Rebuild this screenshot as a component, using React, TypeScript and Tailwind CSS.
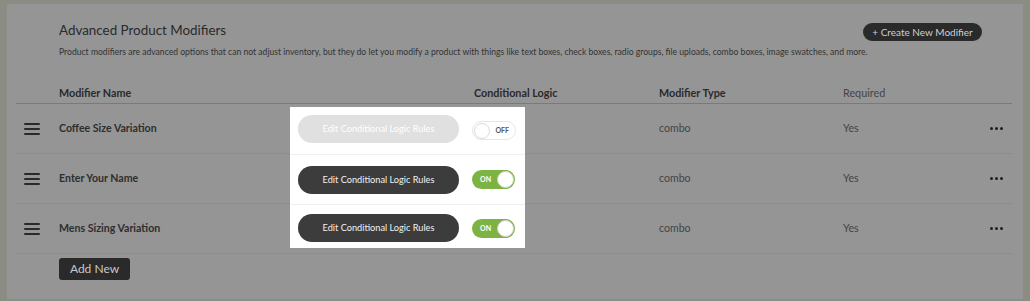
import React from "react";

type Row = { name: string; enabled: boolean };

const rows: Row[] = [
  { name: "Coffee Size Variation", enabled: false },
  { name: "Enter Your Name", enabled: true },
  { name: "Mens Sizing Variation", enabled: true },
];

function DragHandle() {
  return (
    <div className="flex w-[16px] flex-col gap-[3px]">
      <span className="h-[2px] w-full rounded bg-[#2a2a2a]" />
      <span className="h-[2px] w-full rounded bg-[#2a2a2a]" />
      <span className="h-[2px] w-full rounded bg-[#2a2a2a]" />
    </div>
  );
}

function Dots() {
  return (
    <div className="flex gap-[2px]">
      <span className="h-[3px] w-[3px] rounded-full bg-[#1f1f1f]" />
      <span className="h-[3px] w-[3px] rounded-full bg-[#1f1f1f]" />
      <span className="h-[3px] w-[3px] rounded-full bg-[#1f1f1f]" />
    </div>
  );
}

function Toggle({ on }: { on: boolean }) {
  if (on) {
    return (
      <div className="flex h-[19px] w-[43px] items-center justify-between rounded-full bg-[#7cb342] pl-[8px] pr-[1px]">
        <span className="text-[7px] font-bold text-white">ON</span>
        <span className="h-[17px] w-[17px] rounded-full border border-[#d0d0d0] bg-white" />
      </div>
    );
  }
  return (
    <div className="flex h-[19px] w-[44px] items-center justify-between rounded-full border border-[#e6e6e6] bg-white pl-[1px] pr-[6px]">
      <span className="h-[16px] w-[16px] rounded-full border border-[#dcdcdc] bg-white" />
      <span className="text-[7px] font-bold text-[#555]">OFF</span>
    </div>
  );
}

function RuleButton({ on }: { on: boolean }) {
  return (
    <div
      className={`flex h-[28px] w-[161px] items-center justify-center rounded-full text-[9.2px] ${
        on ? "bg-[#3c3c3c] text-[#f2f2f2]" : "bg-[#e0e0e0] text-white"
      }`}
    >
      Edit Conditional Logic Rules
    </div>
  );
}

export default function App() {
  return (
    <div
      className="h-[301px] w-[1030px] overflow-hidden bg-[#8b8c84] pl-[7px] pt-[4px]"
      style={{ fontFamily: 'Lato, "Noto Sans", sans-serif' }}
    >
      <div className="relative h-[295px] w-[1016px] bg-[#959595] pt-[15px]">
        {/* Heading */}
        <div className="flex items-start justify-between pl-[52px] pr-[41px]">
          <h1 className="text-[13.4px] leading-[22px] text-[#2a2a2a]">Advanced Product Modifiers</h1>
          <button className="mt-[4px] flex h-[18px] w-[119px] items-center justify-center rounded-full bg-[#2a2a2a] text-[10px] text-[#cfcfcf]">
            + Create New Modifier
          </button>
        </div>
        <p className="mt-[5px] pl-[52px] text-[8.6px] leading-[12px] text-[#333]">
          Product modifiers are advanced options that can not adjust inventory, but they do let you modify a product with things like text boxes, check boxes, radio groups, file uploads, combo boxes, image swatches, and more.
        </p>

        {/* Table */}
        <div className="ml-[9px] mr-[11px] mt-[25px]">
          <div className="flex h-[21px] items-center border-b border-[#7a7a7a] text-[10.8px] text-[#2a2a2a]">
            <div className="w-[43px]" />
            <div className="w-[415px] font-bold">Modifier Name</div>
            <div className="w-[185px] font-bold">Conditional Logic</div>
            <div className="w-[184px] font-bold">Modifier Type</div>
            <div className="font-normal text-[#454545]">Required</div>
          </div>
          {rows.map((r) => (
            <div key={r.name} className="flex h-[50px] items-center border-b border-[#8d8d8d] text-[10.6px]">
              <div className="w-[43px] pl-[8px]">
                <DragHandle />
              </div>
              <div className="w-[415px] font-bold text-[#2e2e2e]">{r.name}</div>
              <div className="w-[185px]" />
              <div className="w-[184px] text-[#444]">combo</div>
              <div className="w-[147px] text-[#444]">Yes</div>
              <Dots />
            </div>
          ))}
          <button className="ml-[43px] mt-[4px] flex h-[22px] w-[71px] items-center justify-center rounded-[3px] bg-[#2a2a2a] text-[12px] text-[#c8c8c8]">
            Add New
          </button>
        </div>

        {/* Spotlight over the conditional logic column */}
        <div className="absolute left-[283px] top-[103px] flex h-[141px] w-[235px] flex-col bg-white">
          {rows.map((r, i) => (
            <div
              key={r.name}
              className={`flex gap-[13px] pl-[8px] ${
                i === 0
                  ? "h-[47px] items-start pt-[8px]"
                  : i === 1
                  ? "h-[50px] items-center border-t border-[#f0f0f0]"
                  : "h-[44px] items-start border-t border-[#f0f0f0] pt-[9px]"
              }`}
            >
              <RuleButton on={r.enabled} />
              <div className={i === 0 ? "mt-[6px]" : i === 2 ? "mt-[5px]" : ""}>
                <Toggle on={r.enabled} />
              </div>
            </div>
          ))}
        </div>
      </div>
    </div>
  );
}
